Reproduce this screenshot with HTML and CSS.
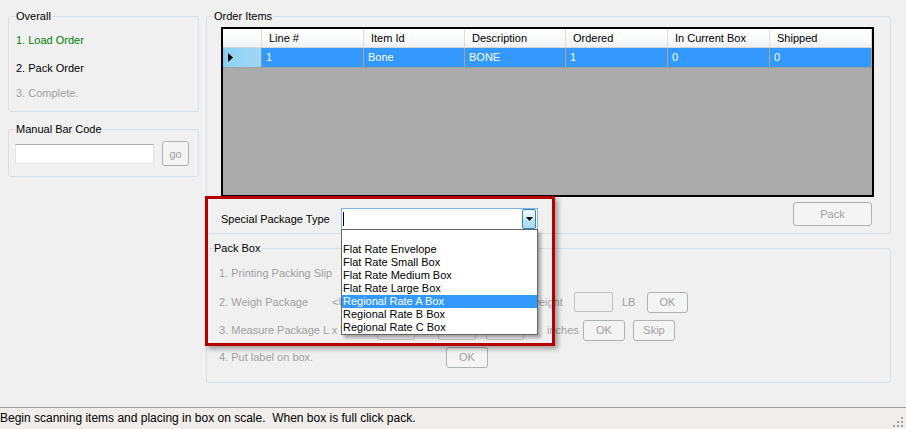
FILE: index.html
```html
<!DOCTYPE html>
<html lang="en">
  <head>
    <meta charset="UTF-8" />
    <meta name="viewport" content="width=device-width, initial-scale=1.0" />
    <title>Pack Order</title>
    <link rel="stylesheet" href="styles.css">
  </head>
  <body>
    <div class="window">
      <div class="main">
        <div class="side">
          <fieldset class="group overall">
            <legend>Overall</legend>
            <div class="steps">
              <div class="step done">1. Load Order</div>
              <div class="step current">2. Pack Order</div>
              <div class="step todo">3. Complete.</div>
            </div>
          </fieldset>

          <fieldset class="group barcode">
            <legend>Manual Bar Code</legend>
            <div class="barcode-row">
              <input type="text" class="textbox barcode-input" />
              <button class="btn go" disabled>go</button>
            </div>
          </fieldset>
        </div>

        <div class="content">
          <fieldset class="group items">
            <legend>Order Items</legend>
            <div class="grid">
              <div class="grid-head">
                <div class="cell corner"></div>
                <div class="cell">Line #</div>
                <div class="cell">Item Id</div>
                <div class="cell">Description</div>
                <div class="cell">Ordered</div>
                <div class="cell">In Current Box</div>
                <div class="cell">Shipped</div>
              </div>
              <div class="grid-row selected">
                <div class="cell rowhead">
                  <svg width="5" height="9" viewBox="0 0 5 9"><path d="M0 0 L5 4.5 L0 9 Z" fill="#000" /></svg>
                </div>
                <div class="cell">1</div>
                <div class="cell">Bone</div>
                <div class="cell">BONE</div>
                <div class="cell">1</div>
                <div class="cell">0</div>
                <div class="cell">0</div>
              </div>
            </div>

            <div class="items-foot">
              <label class="combo-label">Special Package Type</label>
              <div class="combo">
                <span class="caret"></span>
                <span class="combo-btn">
                  <svg width="7" height="4" viewBox="0 0 7 4"><path d="M0 0 H7 L3.5 4 Z" fill="#000" /></svg>
                </span>
                <ul class="droplist">
                  <li>&nbsp;</li>
                  <li>Flat Rate Envelope</li>
                  <li>Flat Rate Small Box</li>
                  <li>Flat Rate Medium Box</li>
                  <li>Flat Rate Large Box</li>
                  <li class="active">Regional Rate A Box</li>
                  <li>Regional Rate B Box</li>
                  <li>Regional Rate C Box</li>
                </ul>
              </div>
              <button class="btn pack" disabled>Pack</button>
            </div>
          </fieldset>

          <fieldset class="group packbox">
            <legend>Pack Box</legend>
            <div class="pack-steps">
              <div class="pack-row slip">
                <span class="step-name">1. Printing Packing Slip</span>
              </div>
              <div class="pack-row weigh">
                <span class="step-name">2. Weigh Package</span>
                <span class="scale-hint">&lt;Use Scale&gt;</span>
                <span class="weight-label">weight</span>
                <span class="textbox small"></span>
                <span class="unit-lb">LB</span>
                <button class="btn ok" disabled>OK</button>
              </div>
              <div class="pack-row measure">
                <span class="step-name">3. Measure Package L x W x H</span>
                <span class="textbox dim"></span>
                <span class="textbox dim"></span>
                <span class="textbox dim"></span>
                <span class="unit-in">inches</span>
                <button class="btn ok" disabled>OK</button>
                <button class="btn ok skip" disabled>Skip</button>
              </div>
              <div class="pack-row label-step">
                <span class="step-name">4. Put label on box.</span>
                <button class="btn ok" disabled>OK</button>
              </div>
            </div>
          </fieldset>

          <div class="callout"></div>
        </div>
      </div>

      <div class="statusbar">
        <span class="status-text">Begin scanning items and placing in box on scale.  When box is full click pack.</span>
        <svg class="grip" width="12" height="12" viewBox="0 0 12 12">
          <rect x="9" y="1" width="2" height="2" fill="#a0a0a0" />
          <rect x="5" y="5" width="2" height="2" fill="#a0a0a0" />
          <rect x="9" y="5" width="2" height="2" fill="#a0a0a0" />
          <rect x="1" y="9" width="2" height="2" fill="#a0a0a0" />
          <rect x="5" y="9" width="2" height="2" fill="#a0a0a0" />
          <rect x="9" y="9" width="2" height="2" fill="#a0a0a0" />
        </svg>
      </div>
    </div>
  </body>
</html>
```

FILE: styles.css
```css
body {
  margin: 0;
  background-color: #f0f0f0;
  font-family: "Liberation Sans", Arial, sans-serif;
  font-size: 11px;
  color: #000;
}
.window {
  width: 906px;
  height: 429px;
  display: flex;
  flex-direction: column;
  overflow: hidden;
}
.main {
  height: 407px;
  display: flex;
}
.side {
  width: 191px;
  margin-left: 8px;
}
.content {
  position: relative;
  width: 685px;
  margin-left: 7px;
}

/* group boxes */
.group {
  box-sizing: border-box;
  margin: 0;
  padding: 0;
  min-width: 0;
  border: 1px solid #d5dfe5;
  border-radius: 3px;
}
.group legend {
  margin-left: 6px;
  padding: 0 1px;
  line-height: 12px;
}

.overall {
  margin-top: 10px;
}
.steps {
  padding: 0 0 11px 7px;
}
.step {
  line-height: 13px;
}
.step.done {
  margin-top: 12px;
  color: #008000;
}
.step.current {
  margin-top: 15px;
}
.step.todo {
  margin-top: 12px;
  color: #a0a0a0;
}

.barcode {
  margin-top: 11px;
}
.barcode-row {
  display: flex;
  align-items: center;
  padding: 6px 0 10px 6px;
}

.textbox {
  box-sizing: border-box;
  display: block;
  margin: 0;
  padding: 0;
  height: 20px;
  background: #fff;
  border: 1px solid #abadb3;
  border-color: #abadb3 #dbdfe6 #e3e9ef #e2e3ea;
}
.barcode-input {
  width: 139px;
}

.btn {
  box-sizing: border-box;
  font: inherit;
  color: #a0a0a0;
  background: #f4f4f4;
  border: 1px solid #adb2b5;
  border-radius: 3px;
  padding: 0;
}
.go {
  width: 27px;
  height: 25px;
  margin-left: 8px;
}

/* order items grid */
.items {
  margin-top: 10px;
}
.grid {
  box-sizing: border-box;
  width: 653px;
  height: 170px;
  margin: 5px 0 0 14px;
  border: 2px solid #000;
  background: #ababab;
}
.grid-head,
.grid-row {
  display: grid;
  grid-template-columns: 39px 102px 101px 101px 102px 102px 102px;
}
.grid-head {
  height: 18px;
  border-bottom: 1px solid #d5d5d5;
  background: linear-gradient(#ffffff, #f9fafb 55%, #eef0f2);
}
.grid-head .cell {
  line-height: 18px;
  padding-left: 7px;
  border-right: 1px solid #dcdcdc;
  white-space: nowrap;
}
.grid-head .corner {
  padding: 0;
}
.grid-row {
  height: 19px;
  border-bottom: 1px solid #a0a0a0;
}
.grid-row .cell {
  line-height: 19px;
  padding-left: 4px;
  border-right: 1px solid #b3a283;
}
.grid-row.selected .cell {
  background: #3399ff;
  color: #fff;
}
.grid-row.selected .rowhead {
  display: flex;
  align-items: center;
  padding-left: 5px;
  background: linear-gradient(90deg, #7fc6ea 0, #8fd2f4 3px, #9ed9f6);
  border-right: 1px solid #7a9cb3;
}

/* package type row */
.items-foot {
  display: flex;
  align-items: flex-start;
  margin-top: 5px;
  padding-bottom: 3px;
}
.combo-label {
  width: 120px;
  margin: 6px 0 0 14px;
  line-height: 22px;
}
.combo {
  position: relative;
  box-sizing: border-box;
  display: flex;
  align-items: center;
  width: 197px;
  height: 22px;
  margin-top: 6px;
  border: 1px solid #7eb4ea;
  background: #fff;
}
.caret {
  width: 0;
  height: 14px;
  margin-left: 1px;
  border-left: 1px solid #000;
}
.combo-btn {
  box-sizing: border-box;
  display: flex;
  align-items: center;
  justify-content: center;
  width: 14px;
  height: 20px;
  margin-left: auto;
  margin-right: 1px;
  border: 1px solid #3c7fb1;
  border-radius: 2px;
  background: linear-gradient(#eaf6fd, #d9f0fc 50%, #bee6fd 51%, #a7d9f5);
}
.droplist {
  position: absolute;
  top: 100%;
  left: -1px;
  z-index: 2;
  box-sizing: border-box;
  width: 197px;
  margin: 0;
  padding: 0;
  list-style: none;
  border: 1px solid #646464;
  background: #fff;
  box-shadow: 3px 3px 3px rgba(0, 0, 0, 0.3);
}
.droplist li {
  height: 13px;
  line-height: 13px;
  padding-left: 1px;
  white-space: nowrap;
}
.droplist li.active {
  background: #3399ff;
  color: #fff;
}
.pack {
  width: 79px;
  height: 24px;
  margin-left: auto;
  margin-right: 18px;
}

/* pack box */
.packbox {
  margin-top: 8px;
}
.pack-steps {
  display: grid;
  grid-template-rows: 30px 28px 28px 26px;
  align-items: center;
  padding: 4px 0 12px 12px;
}
.pack-row {
  display: flex;
  align-items: center;
  color: #a0a0a0;
  line-height: 13px;
  white-space: nowrap;
}
.weigh .step-name {
  width: 113px;
}
.measure .step-name {
  width: 158px;
}
.label-step .step-name {
  width: 227px;
}
.scale-hint {
  width: 199px;
}
.weight-label {
  width: 43px;
}
.pack-row .textbox {
  background: #f0f0f0;
  border: 1px solid #c2c2c2;
  border-radius: 2px;
}
.textbox.small {
  width: 39px;
}
.textbox.dim {
  width: 38px;
  margin-right: 23px;
}
.textbox.dim:nth-of-type(3) {
  margin-right: 10px;
}
.unit-lb {
  width: 25px;
  margin-left: 9px;
}
.unit-in {
  width: 36px;
}
.btn.ok {
  width: 42px;
  height: 21px;
}
.weigh .btn.ok {
  width: 41px;
}
.btn.skip {
  margin-left: 8px;
}

/* red highlight around the package type picker */
.callout {
  position: absolute;
  left: -1px;
  top: 196px;
  z-index: 3;
  box-sizing: border-box;
  width: 350px;
  height: 150px;
  border: 3px solid #b40000;
  box-shadow: 3px 3px 5px rgba(0, 0, 0, 0.35);
  pointer-events: none;
}

/* status bar */
.statusbar {
  display: flex;
  align-items: center;
  justify-content: space-between;
  height: 21px;
  border-top: 1px solid #a0a0a0;
  background: #f0edeb;
}
.status-text {
  white-space: pre;
  font-size: 12px;
  line-height: 21px;
}
.grip {
  margin: 6px 2px 0 0;
}
```
